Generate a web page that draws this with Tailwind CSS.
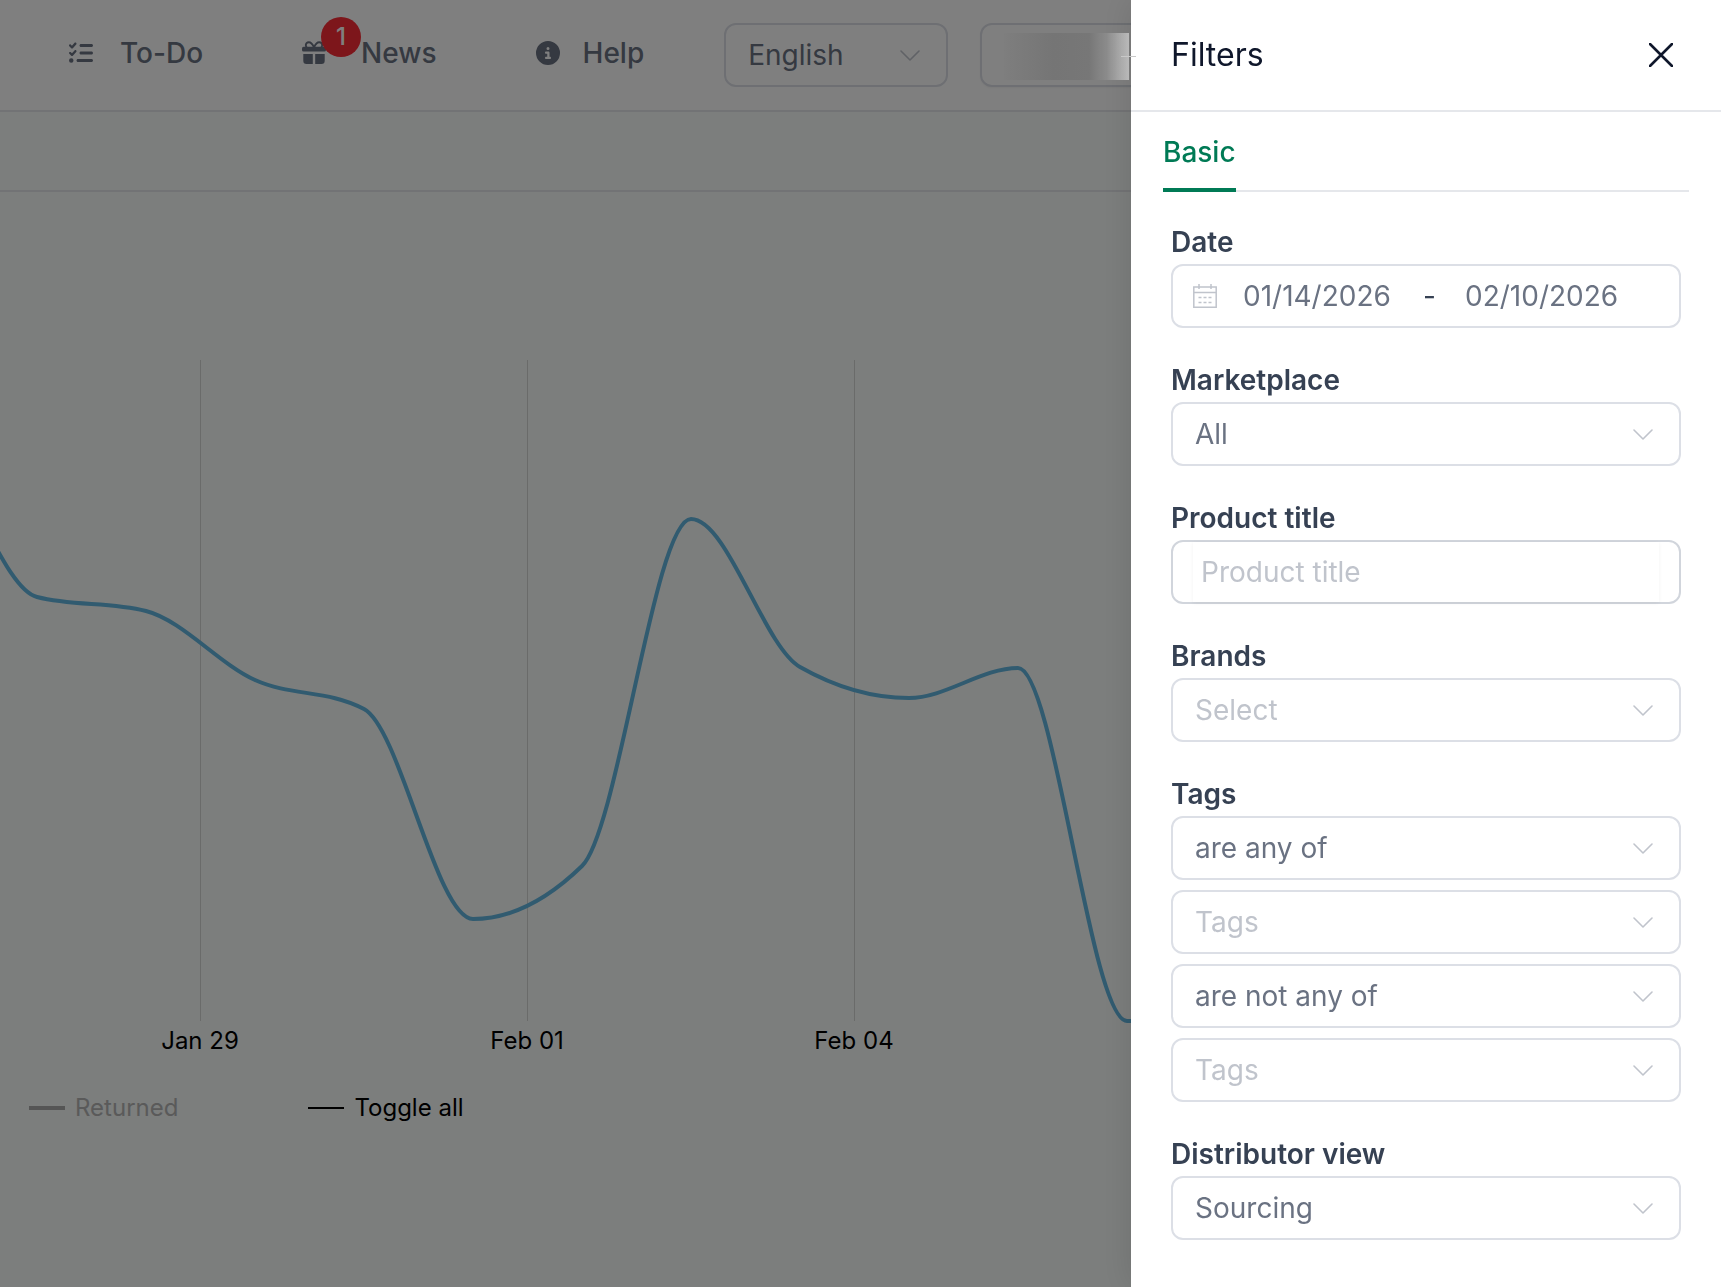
<!DOCTYPE html>
<html lang="en">
<head>
  <meta charset="UTF-8">
  <meta name="viewport" content="width=device-width, initial-scale=1.0">
  <title>Filters</title>
  <script src="https://cdn.jsdelivr.net/npm/@tailwindcss/browser@4"></script>
</head>
<body class="min-h-screen overflow-hidden bg-[#f8fcfa] font-['Inter',sans-serif] text-[28px] text-gray-500">

  <!-- icon sprite -->
  <svg class="hidden">
    <symbol id="chevron" viewBox="0 0 20 11">
      <path d="M1 1l9 9 9-9" fill="none" stroke="currentColor" stroke-width="1.6" stroke-linecap="round" stroke-linejoin="round"/>
    </symbol>
  </svg>

  <!-- top bar -->
  <header class="flex h-28 items-center border-b-2 border-gray-200 bg-white pl-[69px] whitespace-nowrap">
    <nav class="flex items-center pb-1 font-medium leading-10">
      <a href="#" class="mr-[99px] flex items-center gap-[27px]">
        <svg class="size-6" viewBox="0 0 512 512" fill="currentColor"><path d="M152.1 38.2c9.9 8.9 10.7 24 1.8 33.9l-72 80c-4.4 4.9-10.6 7.8-17.2 7.9s-12.9-2.4-17.6-7L7 113C-2.3 103.6-2.3 88.4 7 79s24.6-9.4 33.9 0l22.1 22.1 55.1-61.2c8.9-9.9 24-10.7 33.9-1.8zm0 160c9.9 8.9 10.7 24 1.8 33.9l-72 80c-4.4 4.9-10.6 7.8-17.2 7.9s-12.9-2.4-17.6-7L7 273c-9.4-9.4-9.4-24.6 0-33.9s24.6-9.4 33.9 0l22.1 22.1 55.1-61.2c8.9-9.9 24-10.7 33.9-1.8zM224 96c0-17.7 14.3-32 32-32H480c17.7 0 32 14.3 32 32s-14.3 32-32 32H256c-17.7 0-32-14.3-32-32zm0 160c0-17.7 14.3-32 32-32H480c17.7 0 32 14.3 32 32s-14.3 32-32 32H256c-17.7 0-32-14.3-32-32zM160 416c0-17.7 14.3-32 32-32H480c17.7 0 32 14.3 32 32s-14.3 32-32 32H192c-17.7 0-32-14.3-32-32zM48 368a48 48 0 1 1 0 96 48 48 0 1 1 0-96z"/></svg>
        To-Do
      </a>
      <a href="#" class="relative mr-[99px] flex items-center gap-[35px]">
        <svg class="size-6" viewBox="0 0 24 24" fill="currentColor">
          <path d="M12 6.5C10.5 3 9 1.3 6.8 1.3c-2 0-3 1.3-3 2.8 0 .9.3 1.7.9 2.4M12 6.5C13.5 3 15 1.3 17.2 1.3c2 0 3 1.3 3 2.8 0 .9-.3 1.7-.9 2.4" fill="none" stroke="currentColor" stroke-width="1.9"/>
          <rect x="0" y="5.8" width="24" height="4.8" rx="1.6"/>
          <path d="M1.3 13h9.5v10H4.5a3.2 3.2 0 0 1-3.2-3.2zM13.2 13h9.5v6.8a3.2 3.2 0 0 1-3.2 3.2h-6.3z"/>
        </svg>
        <span class="absolute -top-4 left-[19px] flex size-10 items-center justify-center rounded-full bg-red-500 text-2xl font-medium text-white">1</span>
        News
      </a>
      <a href="#" class="mr-20 flex items-center gap-[23px]">
        <svg class="size-6" viewBox="0 0 512 512" fill="currentColor"><path d="M256 512A256 256 0 1 0 256 0a256 256 0 1 0 0 512zM216 336h24V272H216c-13.3 0-24-10.7-24-24s10.7-24 24-24h48c13.3 0 24 10.7 24 24v88h8c13.3 0 24 10.7 24 24s-10.7 24-24 24H216c-13.3 0-24-10.7-24-24s10.7-24 24-24zm40-208a32 32 0 1 1 0 64 32 32 0 1 1 0-64z"/></svg>
        Help
      </a>
    </nav>
    <div class="relative mr-8 w-56 shrink-0">
      <select aria-label="Language" class="block h-16 w-full appearance-none rounded-xl border-2 border-[#dcdfe6] bg-white px-[22px]">
        <option>English</option>
      </select>
      <svg class="pointer-events-none absolute top-[27px] right-7 h-[11px] w-5 text-[#c0c4cc]"><use href="#chevron"/></svg>
    </div>
    <button aria-label="Account" class="h-16 w-60 shrink-0 rounded-xl border-2 border-[#dcdfe6] bg-white shadow-xs"></button>
  </header>
  <div class="h-20 border-b-2 border-gray-200"></div>

  <!-- chart -->
  <main class="pt-42">
    <svg class="block h-[700px] w-full overflow-hidden text-2xl" fill="#000" text-anchor="middle">
      <g stroke="#d4d6d5">
        <path d="M200.5 0V661M527.5 0V661M854.5 0V661"/>
      </g>
      <path id="series" fill="none" stroke="#62b6e0" stroke-width="4" stroke-linejoin="bevel"/>
      <text x="200" y="689">Jan 29</text>
      <text x="527" y="689">Feb 01</text>
      <text x="854" y="689">Feb 04</text>
    </svg>
    <div class="mt-8 flex gap-[130px] pl-[29px] text-2xl leading-8 text-black">
      <button class="flex items-center gap-2.5 text-[#b4b4b4]"><span class="h-1 w-9 bg-[#aaa]"></span>Returned</button>
      <button class="flex items-center gap-2.5"><span class="h-0.5 w-9 bg-black"></span>Toggle all</button>
    </div>
  </main>

  <!-- backdrop -->
  <div class="fixed inset-0 bg-black/50">
    <div class="absolute top-[33px] right-[592px] h-[47px] w-[125px] bg-[linear-gradient(90deg,#7e7e7e_0%,#757575_40%,#777777_68%,#8c8c8c_82%,#c4c4c4_100%)]"></div>
  </div>

  <!-- filter drawer -->
  <aside class="fixed inset-y-0 right-0 flex w-[590px] flex-col bg-white shadow-[0_0_32px_rgba(0,0,0,0.12)]">
    <div class="flex h-28 shrink-0 items-center justify-between border-b-2 border-gray-200 pr-12 pl-10">
      <h2 class="text-[32px] text-slate-900">Filters</h2>
      <button aria-label="Close" class="text-slate-900">
        <svg class="size-6" viewBox="0 0 24 24"><path d="M1 1l22 22M23 1L1 23" stroke="currentColor" stroke-width="2.6" stroke-linecap="round"/></svg>
      </button>
    </div>

    <div class="mx-8 flex h-20 shrink-0 border-b-2 border-gray-200">
      <button class="-mb-0.5 border-b-4 border-emerald-700 pt-1 font-medium text-emerald-700">Basic</button>
    </div>

    <form class="flex flex-col gap-[30px] px-10 pt-7">
      <div>
        <label for="dateFrom" class="block leading-[44px] font-semibold text-gray-700">Date</label>
        <div class="flex h-16 items-center rounded-xl border-2 border-[#dcdfe6] pl-5">
          <svg class="mr-[26px] size-6 shrink-0 text-[#c0c4cc]" viewBox="0 0 24 24" fill="none" stroke="currentColor" stroke-width="1.5">
            <path d="M.8 3h22.4v20.2H.8zM.8 8.5h22.4M6 0v5M18 0v5M5.5 13.5h3M10.5 13.5h3M15.5 13.5h3M5.5 18.5h3M10.5 18.5h3M15.5 18.5h3"/>
          </svg>
          <input id="dateFrom" type="text" value="01/14/2026" class="w-[180px] outline-none">
          <span class="w-[42px] text-gray-700">-</span>
          <input id="dateTo" type="text" aria-label="End date" value="02/10/2026" class="w-[180px] outline-none">
        </div>
      </div>

      <div>
        <label for="marketplace" class="block leading-[44px] font-semibold text-gray-700">Marketplace</label>
        <div class="relative">
          <select id="marketplace" class="block h-16 w-full appearance-none rounded-xl border-2 border-[#dcdfe6] px-[22px]">
            <option>All</option>
          </select>
          <svg class="pointer-events-none absolute top-[27px] right-7 h-[11px] w-5 text-[#c0c4cc]"><use href="#chevron"/></svg>
        </div>
      </div>

      <div>
        <label for="title" class="block leading-[44px] font-semibold text-gray-700">Product title</label>
        <div class="h-16 rounded-xl border-2 border-gray-300 px-5">
          <input id="title" type="text" placeholder="Product title" class="h-full w-full px-2 shadow-[0_1px_4px_rgba(0,0,0,0.05)] outline-none placeholder:text-[#c0c4cc]">
        </div>
      </div>

      <div>
        <label for="brands" class="block leading-[44px] font-semibold text-gray-700">Brands</label>
        <div class="relative">
          <select id="brands" class="block h-16 w-full appearance-none rounded-xl border-2 border-[#dcdfe6] px-[22px] text-[#c0c4cc]">
            <option>Select</option>
          </select>
          <svg class="pointer-events-none absolute top-[27px] right-7 h-[11px] w-5 text-[#c0c4cc]"><use href="#chevron"/></svg>
        </div>
      </div>

      <div>
        <label for="tagsMode" class="block leading-[44px] font-semibold text-gray-700">Tags</label>
        <div class="flex flex-col gap-2.5">
          <div class="relative">
            <select id="tagsMode" class="block h-16 w-full appearance-none rounded-xl border-2 border-[#dcdfe6] px-[22px]">
              <option>are any of</option>
            </select>
            <svg class="pointer-events-none absolute top-[27px] right-7 h-[11px] w-5 text-[#c0c4cc]"><use href="#chevron"/></svg>
          </div>
          <div class="relative">
            <select aria-label="Included tags" class="block h-16 w-full appearance-none rounded-xl border-2 border-[#dcdfe6] px-[22px] text-[#c0c4cc]">
              <option>Tags</option>
            </select>
            <svg class="pointer-events-none absolute top-[27px] right-7 h-[11px] w-5 text-[#c0c4cc]"><use href="#chevron"/></svg>
          </div>
          <div class="relative">
            <select aria-label="Exclusion mode" class="block h-16 w-full appearance-none rounded-xl border-2 border-[#dcdfe6] px-[22px]">
              <option>are not any of</option>
            </select>
            <svg class="pointer-events-none absolute top-[27px] right-7 h-[11px] w-5 text-[#c0c4cc]"><use href="#chevron"/></svg>
          </div>
          <div class="relative">
            <select aria-label="Excluded tags" class="block h-16 w-full appearance-none rounded-xl border-2 border-[#dcdfe6] px-[22px] text-[#c0c4cc]">
              <option>Tags</option>
            </select>
            <svg class="pointer-events-none absolute top-[27px] right-7 h-[11px] w-5 text-[#c0c4cc]"><use href="#chevron"/></svg>
          </div>
        </div>
      </div>

      <div>
        <label for="view" class="block leading-[44px] font-semibold text-gray-700">Distributor view</label>
        <div class="relative">
          <select id="view" class="block h-16 w-full appearance-none rounded-xl border-2 border-[#dcdfe6] px-[22px]">
            <option>Sourcing</option>
          </select>
          <svg class="pointer-events-none absolute top-[27px] right-7 h-[11px] w-5 text-[#c0c4cc]"><use href="#chevron"/></svg>
        </div>
      </div>
    </form>
    <span class="absolute top-14 -left-2.5 h-px w-[15px] bg-[#c8c8c8]"></span>
  </aside>

  <script>
    const points = [
      [-72, 95], [37, 237], [146, 251], [255, 320], [364, 349], [473, 559], [582, 506],
      [691, 159], [800, 307], [909, 338], [1018, 308], [1127, 661], [1236, 661]
    ];

    const slope = (a, b) => (b[1] - a[1]) / (b[0] - a[0]);

    // monotone cubic: flat at the extremes, never overshoots
    const tangents = points.map((p, i) => {
      if (i === 0 || i === points.length - 1) return 0;
      const s0 = slope(points[i - 1], p);
      const s1 = slope(p, points[i + 1]);
      if (s0 * s1 <= 0) return 0;
      return Math.sign(s0) * Math.min(2 * Math.abs(s0), 2 * Math.abs(s1), Math.abs(s0 + s1) / 2);
    });

    let d = 'M' + points[0];
    for (let i = 1; i < points.length; i++) {
      const [x0, y0] = points[i - 1];
      const [x1, y1] = points[i];
      const dx = (x1 - x0) / 3;
      d += `C${x0 + dx},${y0 + dx * tangents[i - 1]} ${x1 - dx},${y1 - dx * tangents[i]} ${x1},${y1}`;
    }
    document.getElementById('series').setAttribute('d', d);
  </script>
</body>
</html>
